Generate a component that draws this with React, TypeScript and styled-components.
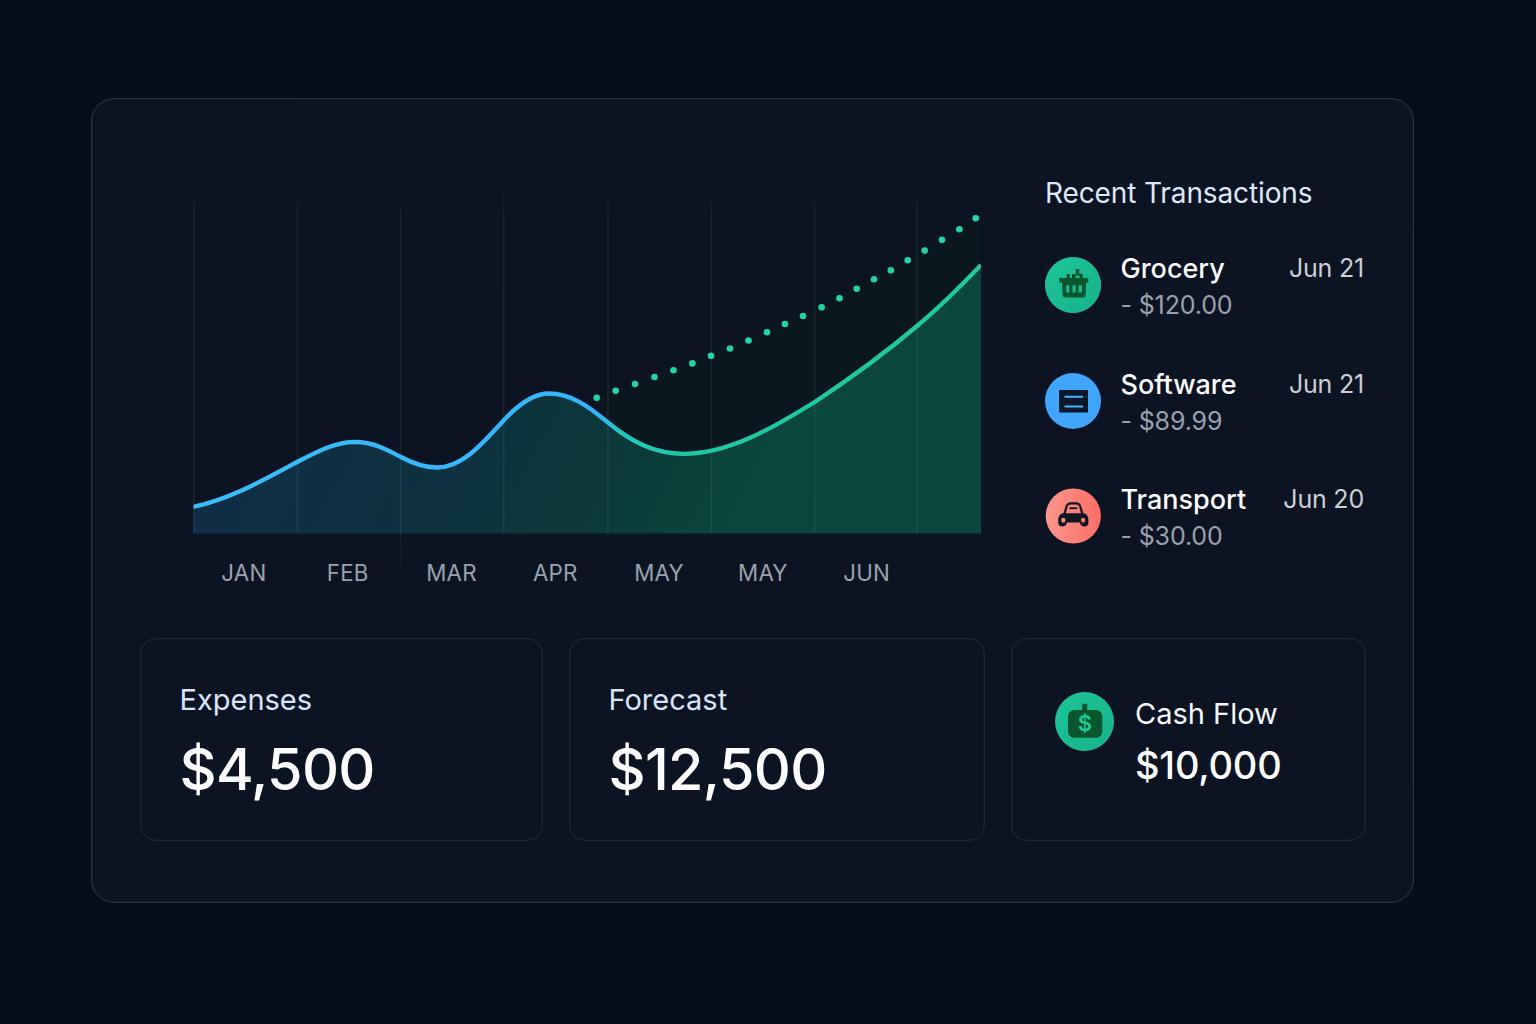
import React from 'react';
import styled, { createGlobalStyle } from 'styled-components';

const Global = createGlobalStyle`
  * { box-sizing: border-box; }
  body {
    margin: 0;
    background: #050d1a;
    font-family: Inter, 'Liberation Sans', sans-serif;
  }
`;

const Page = styled.main`
  width: 1536px;
  height: 1024px;
  padding: 98px 0 0 91px;
  overflow: hidden;
  background: radial-gradient(ellipse at 50% 50%, #040c18 55%, #060e1b 100%);
`;

const Panel = styled.section`
  width: 1323px;
  height: 805px;
  padding: 81px 46px 0 47.5px;
  border: 1px solid #2a3442;
  border-radius: 23px;
  background: #0c1423;
  box-shadow: inset 0 0 0 0.5px #1c2634;
`;

const Top = styled.div`
  display: flex;
  height: 458px;
`;

const ChartColumn = styled.div`
  width: 788px;
  margin-left: 53.5px;
`;

const Months = styled.div`
  display: grid;
  grid-template-columns: repeat(7, 103.8px);
  margin-left: -1px;
  padding-top: 6px;
`;

const Month = styled.span`
  font-size: 22.3px;
  line-height: 26px;
  letter-spacing: 0.2px;
  text-align: center;
  color: #9ba1ae;
`;

const Chart = styled.svg`
  display: block;
  overflow: visible;
`;

const Transactions = styled.aside`
  width: 319px;
  margin-left: 64px;
`;

const Heading = styled.h2`
  margin: 0;
  font-size: 28px;
  line-height: 26px;
  font-weight: 400;
  letter-spacing: -0.12px;
  color: #dfe7f7;
  white-space: nowrap;
`;

const List = styled.ul`
  display: grid;
  grid-auto-rows: 115.7px;
  margin: 45px 0 0;
  padding: 0;
  list-style: none;
`;

const Item = styled.li`
  display: flex;
  align-items: flex-start;
`;

const Badge = styled.svg<{ $size: number; $drop?: number }>`
  display: block;
  flex: none;
  width: ${(p) => p.$size}px;
  height: ${(p) => p.$size}px;
  margin-top: ${(p) => p.$drop ?? 0}px;
`;

const ItemText = styled.div`
  margin-left: 19.5px;
  flex: 1;
  white-space: nowrap;
`;

const Name = styled.div`
  font-size: 27px;
  line-height: 36px;
  font-weight: 500;
  color: #fcfcfe;
`;

const Amount = styled.div`
  font-size: 25px;
  line-height: 37.5px;
  letter-spacing: -0.15px;
  color: #9ba0af;
`;

const DateText = styled.time`
  font-size: 25px;
  line-height: 35.5px;
  letter-spacing: -0.2px;
  color: #cdced6;
  white-space: nowrap;
`;

const Cards = styled.div`
  display: flex;
  gap: 26px;
`;

const Card = styled.article<{ $width: number; $inset?: string }>`
  display: flex;
  flex: none;
  align-items: flex-start;
  width: ${(p) => p.$width}px;
  height: 203px;
  padding: ${(p) => p.$inset ?? '42px 39px 0'};
  border: 1px solid #1d2937;
  border-radius: 16px;
  box-shadow: inset 0 0 0 0.5px #17212f;
  white-space: nowrap;
`;

const Label = styled.div`
  font-size: 29px;
  line-height: 37px;
  color: #d9e4fa;
`;

const Value = styled.div`
  margin-top: 16px;
  font-size: 57.5px;
  line-height: 71px;
  font-weight: 550;
  letter-spacing: -0.7px;
  color: #ffffff;
`;

const FlowText = styled.div`
  margin: 4px 0 0 21px;
`;

const FlowLabel = styled.div`
  font-size: 29px;
  line-height: 36px;
  color: #f6f8fc;
`;

const FlowValue = styled.div`
  margin-top: 10px;
  font-size: 38px;
  line-height: 46px;
  font-weight: 550;
  letter-spacing: -0.2px;
  color: #ffffff;
`;

const CURVE =
  'M193 507 C230 499 262 481 298 461.500 C320 450 336 442 355 442 C373 442 386 449 401 457 C413 463.500 424 467.500 437 467.500 C462 467.500 482 444 504 420 C517 406 532 393.500 549 393.500 C571 393.500 588 406 608 422.500 C631 441.500 654 453.800 684 453.800 C727 453.800 768 431 814 402.500 C848 380 884 354 917 326 C940 307 960 287 981 265';

const FORECAST: [number, number][] = [
  [596.7, 397.8], [615.7, 390.8], [635, 384], [654.5, 377], [673.5, 370.3],
  [692.4, 363.4], [711, 355.7], [730, 348.5], [748.5, 340.5], [767, 332.3],
  [785, 324], [803, 316], [821.6, 307.2], [839.5, 298.3], [856.7, 288.8],
  [874, 279.2], [890.8, 270.2], [907.7, 260.3], [924.7, 250.6],
  [942, 239.8], [959.3, 229.3], [975.7, 218.2],
];

const GRID: [number, number, number][] = [
  [194, 200, 533], [297.5, 200, 533], [400.5, 207, 568], [503.7, 187, 533],
  [608, 200, 533], [711.5, 200, 533], [814.5, 200, 533], [917, 200, 533],
];

function CashChart() {
  return (
    <Chart width="788" height="374" viewBox="193 180 788 374">
      <defs>
        <linearGradient id="stroke" gradientUnits="userSpaceOnUse" x1="193" y1="0" x2="981" y2="0">
          <stop offset="0" stopColor="#38bdf8" />
          <stop offset="0.515" stopColor="#33b5fa" />
          <stop offset="0.54" stopColor="#22c9c0" />
          <stop offset="0.63" stopColor="#1fc7a0" />
          <stop offset="1" stopColor="#1fca9c" />
        </linearGradient>
        <linearGradient id="area" gradientUnits="userSpaceOnUse" x1="270" y1="380" x2="690" y2="600">
          <stop offset="0" stopColor="#0f2e46" />
          <stop offset="0.45" stopColor="#0d313f" />
          <stop offset="0.75" stopColor="#0b3a39" />
          <stop offset="1" stopColor="#0a463b" />
        </linearGradient>
        <linearGradient id="grid" gradientUnits="userSpaceOnUse" x1="0" y1="187" x2="0" y2="568">
          <stop offset="0" stopColor="#a0cdd2" stopOpacity="0.02" />
          <stop offset="0.08" stopColor="#a0cdd2" stopOpacity="0.08" />
          <stop offset="0.9" stopColor="#a0cdd2" stopOpacity="0.09" />
          <stop offset="0.93" stopColor="#a0cdd2" stopOpacity="0.06" />
          <stop offset="1" stopColor="#a0cdd2" stopOpacity="0.05" />
        </linearGradient>
        <clipPath id="plot">
          <rect x="193.5" y="180" width="787.5" height="354" />
        </clipPath>
      </defs>
      <g clipPath="url(#plot)">
        <path d="M596 398 Q790 330 981 214 V534 H608 V423 Z" fill="#0b171f" />
        <path d={`${CURVE} V533.5 H193 Z`} fill="url(#area)" />
      </g>
      {GRID.map(([x, top, bottom]) => (
        <rect key={x} x={x - 0.75} y={top} width="1.5" height={bottom - top} fill="url(#grid)" />
      ))}
      <g clipPath="url(#plot)">
        <path d={CURVE} fill="none" stroke="url(#stroke)" strokeWidth="4.3" />
      </g>
      {FORECAST.map(([x, y]) => (
        <circle key={x} cx={x} cy={y} r="3.3" fill="#22d3a5" />
      ))}
    </Chart>
  );
}

function GreenGradient({ id }: { id: string }) {
  return (
    <defs>
      <linearGradient id={id} x1="0" y1="0" x2="1" y2="1">
        <stop offset="0" stopColor="#1dc598" />
        <stop offset="1" stopColor="#17b289" />
      </linearGradient>
    </defs>
  );
}

function GroceryIcon() {
  return (
    <Badge $size={56} $drop={5.5} viewBox="0 0 56 56">
      <GreenGradient id="leaf" />
      <circle cx="28" cy="28" r="27.6" fill="url(#leaf)" stroke="#1fd0a0" strokeWidth="0.8" />
      <path
        d="M14.2 21H21.700V17H24.800V21H27V17.200H30.800V12H34.200V16.800H37.800V21H43.300V25.500H41.200L40.600 38Q40.400 40.500 38 40.500H20.200Q17.800 40.500 17.600 38L17 25.500H14.200Z"
        fill="#08562e"
      />
      <path d="M22.8 28.200V35.500M29 28.200V35.500M35.300 28.200V35.500" stroke="#1bbd91" strokeWidth="3" />
      <rect x="30.6" y="18.600" width="4" height="2.400" fill="#1bbd91" />
    </Badge>
  );
}

function SoftwareIcon() {
  return (
    <Badge $size={56} $drop={6} viewBox="0 0 56 56">
      <circle cx="28" cy="28" r="28" fill="#3fa5fd" />
      <rect x="14" y="17" width="29" height="22.5" rx="1" fill="#0b1829" />
      <path d="M19.500 23.700h18.500M19.500 33.500h18.500" stroke="#45b4fd" strokeWidth="2" />
    </Badge>
  );
}

function TransportIcon() {
  return (
    <Badge $size={56} $drop={6} viewBox="0 0 56 56">
      <defs>
        <linearGradient id="coral" x1="0" y1="0" x2="1" y2="0">
          <stop offset="0" stopColor="#fc968d" />
          <stop offset="1" stopColor="#fb6e65" />
        </linearGradient>
      </defs>
      <circle cx="28.3" cy="28" r="27.6" fill="url(#coral)" />
      <path d="M19.300 26.500L21.600 18.300Q22.500 15.300 25.500 15.300H31.300Q34.300 15.300 35.200 18.300L37.500 26.500" fill="none" stroke="#111722" strokeWidth="2.2" />
      <path d="M24.5 20.200H32.200" stroke="#111722" strokeWidth="1.8" />
      <path
        d="M17.500 25.300H39.300Q43.400 27 43.400 31.500V34.500Q43.400 38.500 39.400 38.500Q35.800 38.500 34.800 34.600H22Q21 38.500 17.300 38.500Q13.200 38.500 13.200 34.500V31.500Q13.200 27 17.500 25.300Z"
        fill="#111722"
      />
      <rect x="16.4" y="30" width="3.800" height="4.400" rx="1.300" fill="#fb8d84" />
      <rect x="36.200" y="30" width="3.800" height="4.400" rx="1.300" fill="#fb7f76" />
    </Badge>
  );
}

const Dollar = styled.text`
  font-family: Inter, sans-serif;
  font-size: 22px;
  font-weight: 600;
`;

function CashIcon() {
  return (
    <Badge $size={59} viewBox="0 0 59 59">
      <GreenGradient id="mint" />
      <circle cx="29.5" cy="29.5" r="29" fill="url(#mint)" stroke="#1fd0a0" strokeWidth="0.8" />
      <rect x="27.2" y="11.8" width="5" height="9" rx="0.8" fill="#08562e" />
      <rect x="13" y="18" width="34.3" height="27.8" rx="6.5" fill="#08562e" />
      <Dollar x="29.8" y="38.5" textAnchor="middle" fill="#20c997">$</Dollar>
    </Badge>
  );
}

const MONTHS = ['JAN', 'FEB', 'MAR', 'APR', 'MAY', 'MAY', 'JUN'];

const ITEMS = [
  { name: 'Grocery', amount: '- $120.00', date: 'Jun 21', Icon: GroceryIcon },
  { name: 'Software', amount: '- $89.99', date: 'Jun 21', Icon: SoftwareIcon },
  { name: 'Transport', amount: '- $30.00', date: 'Jun 20', Icon: TransportIcon },
];

export default function App() {
  return (
    <Page>
      <Global />
      <Panel>
        <Top>
          <ChartColumn>
            <CashChart />
            <Months>
              {MONTHS.map((m, i) => (
                <Month key={i}>{m}</Month>
              ))}
            </Months>
          </ChartColumn>
          <Transactions>
            <Heading>Recent Transactions</Heading>
            <List>
              {ITEMS.map(({ name, amount, date, Icon }) => (
                <Item key={name}>
                  <Icon />
                  <ItemText>
                    <Name>{name}</Name>
                    <Amount>{amount}</Amount>
                  </ItemText>
                  <DateText>{date}</DateText>
                </Item>
              ))}
            </List>
          </Transactions>
        </Top>
        <Cards>
          <Card $width={403}>
            <div>
              <Label>Expenses</Label>
              <Value>$4,500</Value>
            </div>
          </Card>
          <Card $width={416.5}>
            <div>
              <Label>Forecast</Label>
              <Value>$12,500</Value>
            </div>
          </Card>
          <Card $width={355} $inset="53px 0 0 43px">
            <CashIcon />
            <FlowText>
              <FlowLabel>Cash Flow</FlowLabel>
              <FlowValue>$10,000</FlowValue>
            </FlowText>
          </Card>
        </Cards>
      </Panel>
    </Page>
  );
}
